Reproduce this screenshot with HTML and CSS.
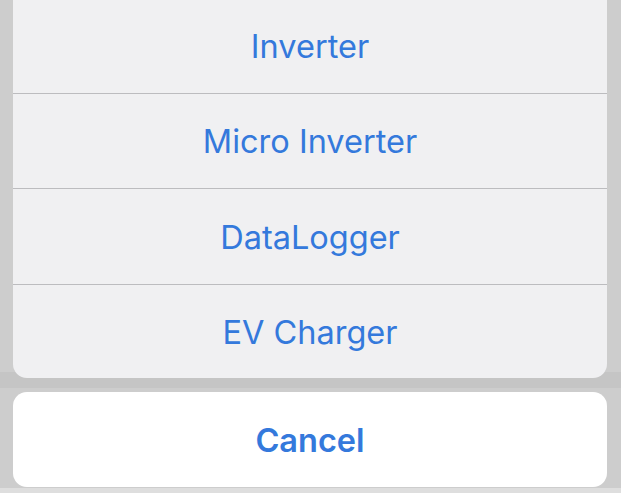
FILE: index.html
```html
<!DOCTYPE html>
<html lang="en">
<head>
    <meta charset="UTF-8">
    <meta name="viewport" content="width=device-width, initial-scale=1.0">
    <title>Device Type</title>
    <link rel="stylesheet" href="styles.css">
</head>
<body>
    <div class="action-sheet">
        <div class="sheet-group">
            <button class="sheet-option">Inverter</button>
            <button class="sheet-option">Micro Inverter</button>
            <button class="sheet-option">DataLogger</button>
            <button class="sheet-option">EV Charger</button>
        </div>
        <button class="sheet-cancel">Cancel</button>
    </div>
</body>
</html>
```

FILE: styles.css
```css
html, body {
    height: 100%;
}
body {
    margin: 0;
    overflow: hidden;
    font-family: Inter, "Noto Sans", Arial, sans-serif;
    background:
        linear-gradient(to bottom,
            #cdcdcd 0, #cdcdcd 372px,
            #c5c5c5 372px, #c5c5c5 388px,
            #cdcdcd 388px, #cdcdcd 488px,
            #dedede 488px);
}
.action-sheet {
    display: flex;
    flex-direction: column;
    gap: 14px;
    padding: 0 14px 0 13px;
    margin-top: -2px;
}
.sheet-group {
    display: flex;
    flex-direction: column;
    background-color: #f0f0f2;
    border-radius: 0 0 14px 14px;
    overflow: hidden;
}
.sheet-option,
.sheet-cancel {
    border: none;
    margin: 0;
    padding: 0;
    background: none;
    font-family: inherit;
    font-size: 32.5px;
    color: #3479dc;
    text-align: center;
    cursor: pointer;
}
.sheet-option {
    height: 95.6px;
    padding-top: 2px;
    border-bottom: 1px solid #bcbcbf;
    font-weight: 400;
}
.sheet-option:last-child {
    border-bottom: none;
    height: 93.5px;
}
.sheet-cancel {
    height: 95px;
    padding-top: 1px;
    background-color: #ffffff;
    border-radius: 14px;
    font-weight: 600;
}
```
